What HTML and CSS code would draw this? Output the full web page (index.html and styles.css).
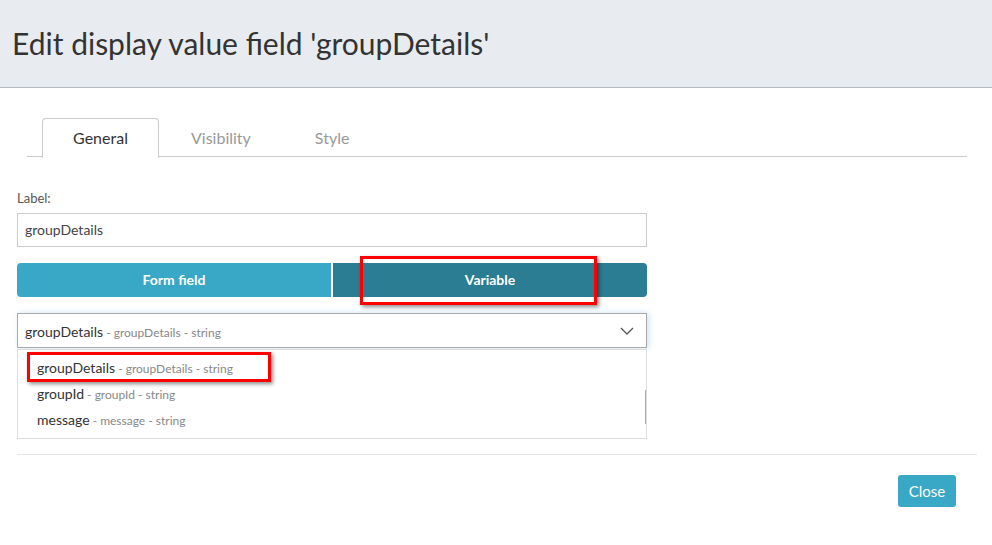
FILE: index.html
```html
<!DOCTYPE html>
<html>
<head>
<meta charset="utf-8">
<link rel="stylesheet" href="styles.css">
</head>
<body>
<div class="modal">
  <div class="modal-header">
    <h1 class="title">Edit display value field 'groupDetails'</h1>
  </div>
  <div class="modal-body">
    <div class="tabs">
      <div class="tab active">General</div>
      <div class="tab">Visibility</div>
      <div class="tab">Style</div>
    </div>
    <div class="field">
      <label class="label">Label:</label>
      <div class="input">groupDetails</div>
    </div>
    <div class="toggle">
      <div class="btn btn-form">Form field</div>
      <div class="btn btn-var">Variable<span class="highlight hl-var"></span></div>
    </div>
    <div class="select-wrap">
      <div class="select">
        <span class="opt"><span class="main">groupDetails</span><span class="sub"> - groupDetails - string</span></span>
        <svg class="chev" width="14" height="8" viewBox="0 0 14 8"><path d="M1 1 L7 7 L13 1" fill="none" stroke="#555" stroke-width="1.3"/></svg>
      </div>
      <div class="behind">
        <div class="behind-label">(</div>
        <div class="behind-input"></div>
      </div>
      <ul class="menu">
        <li class="item"><span class="main">groupDetails</span><span class="sub"> - groupDetails - string</span><span class="highlight hl-item"></span></li>
        <li class="item"><span class="main">groupId</span><span class="sub"> - groupId - string</span></li>
        <li class="item"><span class="main">message</span><span class="sub"> - message - string</span></li>
        <span class="scroll"></span>
      </ul>
    </div>
  </div>
  <div class="modal-footer">
    <div class="close">Close</div>
  </div>
</div>
</body>
</html>
```
FILE: styles.css
```css
* { box-sizing: border-box; }
html, body { margin: 0; padding: 0; background: #fff; }
body { font-family: Lato, "Open Sans", sans-serif; color: #333; }

.modal-header {
  height: 88px;
  background: #e8ecf0;
  border-bottom: 1px solid #b4bac1;
  padding: 0 12px;
  display: flex;
  align-items: center;
}
.title {
  margin: 0;
  font-weight: 400;
  font-size: 30px;
  color: #333;
  letter-spacing: 0;
  padding-bottom: 2px;
}

.modal-body {
  padding: 30px 15px 0 17px;
}
.tabs {
  margin: 0 10px;
  border-bottom: 1px solid #ccc;
  display: flex;
  padding-left: 15px;
  height: 39px;
}
.tab {
  height: 39px;
  padding: 0 31px 0 31px;
  font-size: 16px;
  line-height: 38px;
  color: #999;
  border: 1px solid transparent;
  border-bottom: none;
}
.tab.active {
  color: #333;
  border-color: #ccc;
  border-radius: 4px 4px 0 0;
  background: #fff;
  height: 40px;
  width: 117px;
  padding: 0;
  text-align: center;
}
.field { margin-top: 33px; width: 630px; }
.label { display: block; font-size: 13px; color: #555; line-height: 16px; }
.input {
  margin-top: 7px;
  height: 34px;
  border: 1px solid #ccc;
  padding: 0 7px;
  font-size: 14px;
  line-height: 32px;
  color: #444;
}

.toggle {
  margin-top: 16px;
  width: 630px;
  display: flex;
  gap: 2px;
}
.btn {
  flex: 1;
  height: 34px;
  line-height: 34px;
  text-align: center;
  color: #fff;
  font-weight: 700;
  font-size: 14px;
  position: relative;
}
.btn-form { background: #38a8c6; border-radius: 4px 0 0 4px; }
.btn-var { background: #2a7d92; border-radius: 0 4px 4px 0; }

.highlight {
  position: absolute;
  border: 3px solid #f00;
  box-shadow: 2px 2px 4px rgba(0,0,0,0.45);
  pointer-events: none;
}
.hl-var { left: 27px; top: -7px; width: 237px; height: 49px; }

.select-wrap { position: relative; width: 630px; margin-top: 16px; }
.select {
  height: 35px;
  border: 1px solid #aaa;
  display: flex;
  align-items: center;
  justify-content: space-between;
  padding: 0 12px 0 7px;
  box-shadow: 2px 0 6px rgba(102,175,233,0.35);
}
.main { font-size: 14px; color: #333; }
.sub { font-size: 12px; color: #888; }
.chev { display: block; }

.behind { margin-top: 16px; height: 76px; position: relative; }
.behind-label { font-size: 13px; color: #555; line-height: 16px; }
.behind-input { margin-top: 10px; height: 34px; border: 1px solid #aaa; }

.menu {
  position: absolute;
  left: 0;
  top: 36px;
  width: 630px;
  height: 90px;
  margin: 0;
  padding: 4px 0 0 0;
  list-style: none;
  background: #fff;
  border: 1px solid #ddd;
}
.item {
  position: relative;
  height: 26px;
  line-height: 26px;
  padding-left: 19px;
}
.hl-item { left: 9px; top: -2px; width: 244px; height: 30px; }
.scroll {
  position: absolute;
  right: 0;
  top: 40px;
  width: 1px;
  height: 34px;
  background: #aaa;
}

.modal-footer {
  margin: 14px 15px 0 17px;
  border-top: 1px solid #e5e5e5;
  padding-top: 20px;
  display: flex;
  justify-content: flex-end;
  padding-right: 21px;
}
.close {
  width: 58px;
  height: 32px;
  line-height: 32px;
  text-align: center;
  background: #38a8c6;
  color: #fff;
  font-size: 15px;
  border-radius: 3px;
}
```
